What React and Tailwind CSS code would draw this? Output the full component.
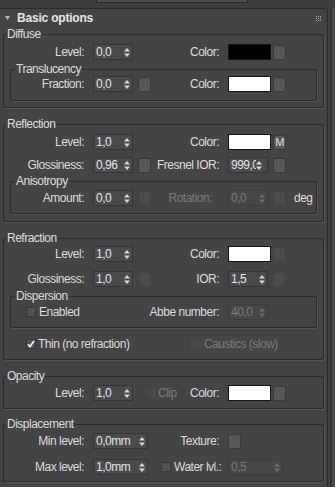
import React from "react";

const T = "text-[#dcdcdc]";
const D = "text-[#7a7a7a]";
const LBL = "flex justify-end whitespace-nowrap shrink-0";

function Arrows({ dim }) {
  const c = dim ? "#6c6c6c" : "#d8d8d8";
  return (
    <svg width="6" height="9" viewBox="0 0 6 9" className="shrink-0">
      <path d="M3 0 L6 3.5 L0 3.5 Z" fill={c} />
      <path d="M0 5.5 L6 5.5 L3 9 Z" fill={c} />
    </svg>
  );
}

function Spinner({ v, wide, dim, clip }) {
  return (
    <div
      className={`${wide ? "w-[55px]" : "w-[40px]"} h-[16px] shrink-0 flex items-center border ${
        dim ? "border-[#3c3c3c] bg-[#464646]" : "border-[#353535] bg-[#4a4a4a]"
      } pl-[2px] pr-[2px]`}
    >
      <span
        className={`flex-1 min-w-0 overflow-hidden whitespace-nowrap leading-[14px] ${
          dim ? D : "text-[#e4e4e4]"
        } ${clip ? "max-w-[25px]" : ""}`}
      >
        {v}
      </span>
      <Arrows dim={dim} />
    </div>
  );
}

function Btn({ dim, className = "", children }) {
  return (
    <div
      className={`w-[13px] h-[15px] shrink-0 rounded-[2px] border ${
        dim ? "border-[#414141] bg-[#4b4b4b]" : "border-[#393939] bg-[#575757]"
      } flex items-center justify-center text-[11px] leading-none text-[#e0e0e0] ${className}`}
    >
      {children}
    </div>
  );
}

function Swatch({ white }) {
  return (
    <div
      className={`w-[43px] h-[16px] shrink-0 border border-[#141414] ${
        white ? "bg-white" : "bg-black"
      }`}
    />
  );
}

function Check({ checked, dim, className = "" }) {
  return (
    <div
      className={`w-[10px] h-[10px] shrink-0 border ${
        dim ? "border-[#474747] bg-[#494949]" : "border-[#383838] bg-[#525252]"
      } flex items-center justify-center ${className}`}
    >
      {checked && (
        <svg width="8" height="8" viewBox="0 0 8 8">
          <path d="M1 4.2 L3 6.6 L7 1" stroke="#f2f2f2" strokeWidth="1.7" fill="none" />
        </svg>
      )}
    </div>
  );
}

function Group({ title, inner, className = "", children }) {
  return (
    <fieldset
      className={`border border-[#2c2c2c] rounded-[2px] shadow-[1px_1px_0_#565656] ${className}`}
    >
      <legend className={`${inner ? "ml-[4px]" : "ml-[2px]"} px-[1px] leading-[14px] ${T}`}>
        {title}
      </legend>
      {children}
    </fieldset>
  );
}

function Row({ className = "", children }) {
  return <div className={`flex items-center h-[16px] ${className}`}>{children}</div>;
}

export default function App() {
  return (
    <div className="w-[335px] h-[487px] overflow-hidden bg-[#444444] flex font-['Liberation_Sans',Arial,sans-serif] text-[12px] tracking-[-0.5px] text-[#dcdcdc]">
      <div className="w-[328px] shrink-0 flex flex-col">
        <div className="h-[8px] shrink-0 bg-[#3c3c3c]">
          <div className="ml-[96px] w-[152px] h-[3px] bg-[#4e4e4e] border-b border-x border-[#2a2a2a]" />
        </div>
        <div className="flex-1 border-t border-r border-[#2b2b2b] rounded-tr-[3px] pl-[3px] pr-[3px]">
          {/* header */}
          <div className="h-[18px] flex items-center justify-between">
            <div className="flex items-center">
              <svg width="5" height="4" viewBox="0 0 5 4" className="ml-[2px]">
                <path d="M0 0 L5 0 L2.5 4 Z" fill="#b8b8b8" />
              </svg>
              <span className="ml-[7px] font-bold text-[12px] tracking-[-0.2px] text-[#e8e8e8] leading-[14px]">
                Basic options
              </span>
            </div>
            <svg width="5" height="5" viewBox="0 0 5 5" className="mr-[3px]">
              {[0, 2, 4].map((x) =>
                [0, 2, 4].map((y) => (
                  <rect key={`${x}-${y}`} x={x} y={y} width="1" height="1" fill="#b0b0b0" />
                ))
              )}
            </svg>
          </div>

          {/* Diffuse */}
          <Group title="Diffuse" className="pb-[6px]">
            <Row className="mt-[3px]">
              <div className={`w-[80px] ${LBL}`}>Level:</div>
              <div className="ml-[9px] w-[59px] shrink-0 flex items-center">
                <Spinner v="0,0" />
              </div>
              <div className={`w-[67px] ${LBL}`}>Color:</div>
              <div className="ml-[9px] flex items-center gap-[2px]">
                <Swatch />
                <Btn />
              </div>
            </Row>
            <Group title="Translucency" inner className="mt-[2px] mx-[6px] pb-[8px]">
              <Row>
                <div className={`w-[73px] ${LBL}`}>Fraction:</div>
                <div className="ml-[9px] w-[59px] shrink-0 flex items-center">
                  <Spinner v="0,0" />
                  <Btn className="ml-[5px]" />
                </div>
                <div className={`w-[67px] ${LBL}`}>Color:</div>
                <div className="ml-[9px] flex items-center gap-[2px]">
                  <Swatch white />
                  <Btn />
                </div>
              </Row>
            </Group>
          </Group>

          {/* Reflection */}
          <Group title="Reflection" className="mt-[9px] pb-[7px]">
            <Row className="mt-[3px]">
              <div className={`w-[80px] ${LBL}`}>Level:</div>
              <div className="ml-[9px] w-[59px] shrink-0 flex items-center">
                <Spinner v="1,0" />
              </div>
              <div className={`w-[67px] ${LBL}`}>Color:</div>
              <div className="ml-[9px] flex items-center gap-[2px]">
                <Swatch white />
                <Btn>M</Btn>
              </div>
            </Row>
            <Row className="mt-[7px]">
              <div className={`w-[80px] ${LBL}`}>Glossiness:</div>
              <div className="ml-[9px] w-[59px] shrink-0 flex items-center">
                <Spinner v="0,96" />
                <Btn className="ml-[5px]" />
              </div>
              <div className={`w-[67px] ${LBL}`}>Fresnel IOR:</div>
              <div className="ml-[9px] flex items-center">
                <Spinner v="999,0" clip />
                <Btn className="ml-[5px]" />
              </div>
            </Row>
            <Group title="Anisotropy" inner className="mt-[1px] mx-[6px] pb-[7px]">
              <Row className="mt-[2px]">
                <div className={`w-[73px] ${LBL}`}>Amount:</div>
                <div className="ml-[9px] w-[59px] shrink-0 flex items-center">
                  <Spinner v="0,0" />
                  <Btn dim className="ml-[5px]" />
                </div>
                <div className={`w-[67px] ${LBL} pr-[7px] ${D}`}>Rotation:</div>
                <div className="ml-[9px] flex items-center">
                  <Spinner v="0,0" dim />
                  <Btn dim className="ml-[5px]" />
                  <span className="ml-[8px]">deg</span>
                </div>
              </Row>
            </Group>
          </Group>

          {/* Refraction */}
          <Group title="Refraction" className="mt-[9px] pb-[7px]">
            <Row className="mt-[1px]">
              <div className={`w-[80px] ${LBL}`}>Level:</div>
              <div className="ml-[9px] w-[59px] shrink-0 flex items-center">
                <Spinner v="1,0" />
              </div>
              <div className={`w-[67px] ${LBL}`}>Color:</div>
              <div className="ml-[9px] flex items-center gap-[2px]">
                <Swatch white />
                <Btn dim />
              </div>
            </Row>
            <Row className="mt-[9px]">
              <div className={`w-[80px] ${LBL}`}>Glossiness:</div>
              <div className="ml-[9px] w-[59px] shrink-0 flex items-center">
                <Spinner v="1,0" />
                <Btn dim className="ml-[5px]" />
              </div>
              <div className={`w-[67px] ${LBL}`}>IOR:</div>
              <div className="ml-[9px] flex items-center">
                <Spinner v="1,5" />
                <Btn dim className="ml-[5px]" />
              </div>
            </Row>
            <Group title="Dispersion" inner className="mt-[2px] mx-[6px] pb-[7px]">
              <Row className="mt-[1px]">
                <div className="w-[141px] shrink-0 flex items-center">
                  <Check className="ml-[15px]" />
                  <span className="ml-[3px]">Enabled</span>
                </div>
                <div className={`w-[67px] ${LBL}`}>Abbe number:</div>
                <div className="ml-[9px] flex items-center">
                  <Spinner v="40,0" dim />
                </div>
              </Row>
            </Group>
            <Row className="mt-[8px]">
              <div className="w-[187px] shrink-0 flex items-center">
                <Check checked className="ml-[22px]" />
                <span className="ml-[2px]">Thin (no refraction)</span>
              </div>
              <Check dim />
              <span className={`ml-[3px] whitespace-nowrap ${D}`}>Caustics (slow)</span>
            </Row>
          </Group>

          {/* Opacity */}
          <Group title="Opacity" className="mt-[9px] pb-[7px]">
            <Row className="mt-[2px]">
              <div className={`w-[80px] ${LBL}`}>Level:</div>
              <div className="ml-[9px] w-[59px] shrink-0 flex items-center">
                <Spinner v="1,0" />
                <Check dim className="ml-[13px]" />
                <span className={`ml-[2px] ${D}`}>Clip</span>
              </div>
              <div className={`w-[67px] ${LBL}`}>Color:</div>
              <div className="ml-[9px] flex items-center gap-[2px]">
                <Swatch white />
                <Btn />
              </div>
            </Row>
          </Group>

          {/* Displacement */}
          <Group title="Displacement" className="mt-[8px] pb-[6px]">
            <Row className="mt-[2px]">
              <div className={`w-[80px] ${LBL}`}>Min level:</div>
              <div className="ml-[9px] w-[59px] shrink-0 flex items-center">
                <Spinner v="0,0mm" wide />
              </div>
              <div className={`w-[67px] ${LBL}`}>Texture:</div>
              <div className="ml-[9px] flex items-center">
                <Btn />
              </div>
            </Row>
            <Row className="mt-[10px]">
              <div className={`w-[80px] ${LBL}`}>Max level:</div>
              <div className="ml-[9px] w-[59px] shrink-0 flex items-center">
                <Spinner v="1,0mm" wide />
              </div>
              <div className="w-[67px] shrink-0 flex items-center whitespace-nowrap">
                <Check className="ml-[9px]" />
                <span className="ml-[3px]">Water lvl.:</span>
              </div>
              <div className="ml-[9px] flex items-center">
                <Spinner v="0,5" wide dim />
              </div>
            </Row>
          </Group>
        </div>
      </div>
      <div className="w-[7px] shrink-0 flex flex-col">
        <div className="h-[8px] bg-[#3c3c3c]" />
        <div className="flex-1 flex bg-[#3e3e3e]">
          <div className="w-[3px]" />
          <div className="w-[1px] bg-[#2c2c2c]" />
          <div className="flex-1 bg-[#4d4d4d]" />
        </div>
      </div>
    </div>
  );
}
